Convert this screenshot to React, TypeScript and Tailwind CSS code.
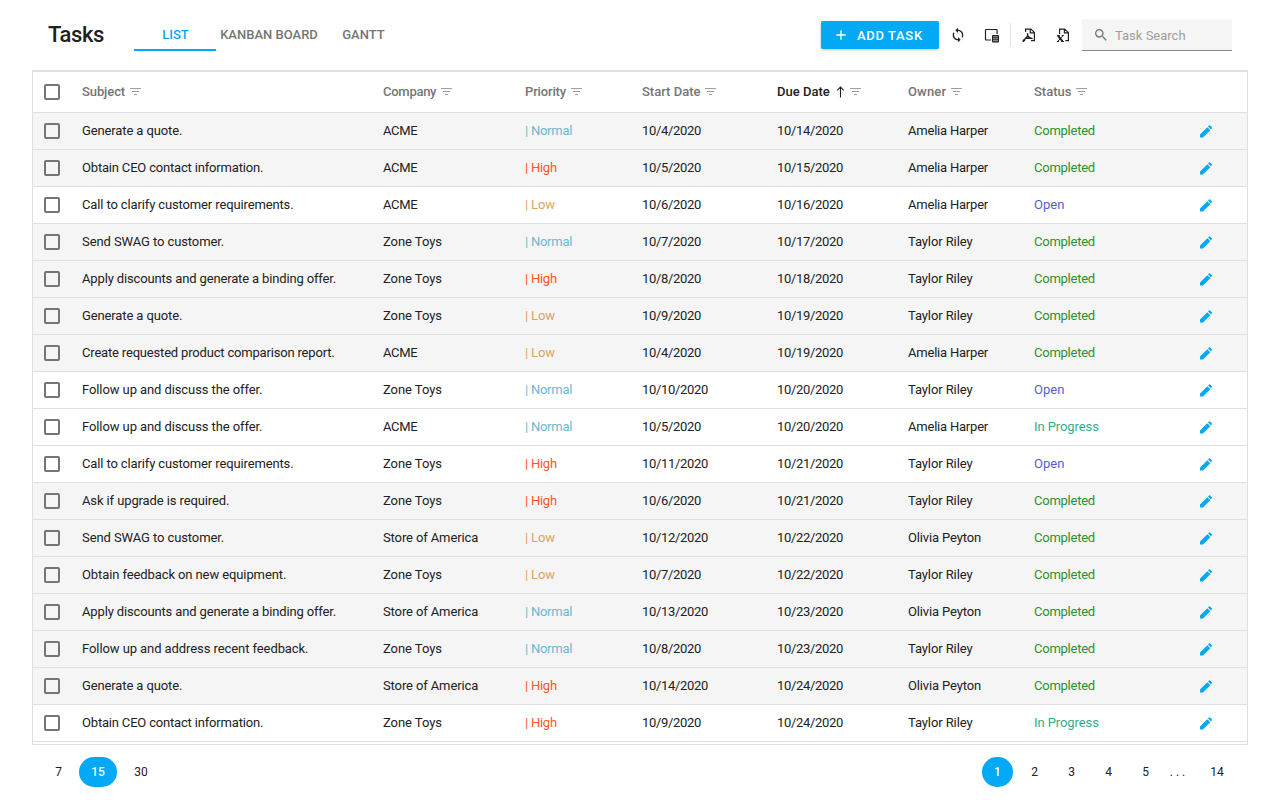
import { MdAdd, MdSearch, MdSync } from "react-icons/md";

type Priority = "Low" | "Normal" | "High";
type Status = "Open" | "In Progress" | "Completed";
type Task = [string, string, Priority, string, string, string, Status];

const tasks: Task[] = [
  ["Generate a quote.", "ACME", "Normal", "10/4/2020", "10/14/2020", "Amelia Harper", "Completed"],
  ["Obtain CEO contact information.", "ACME", "High", "10/5/2020", "10/15/2020", "Amelia Harper", "Completed"],
  ["Call to clarify customer requirements.", "ACME", "Low", "10/6/2020", "10/16/2020", "Amelia Harper", "Open"],
  ["Send SWAG to customer.", "Zone Toys", "Normal", "10/7/2020", "10/17/2020", "Taylor Riley", "Completed"],
  ["Apply discounts and generate a binding offer.", "Zone Toys", "High", "10/8/2020", "10/18/2020", "Taylor Riley", "Completed"],
  ["Generate a quote.", "Zone Toys", "Low", "10/9/2020", "10/19/2020", "Taylor Riley", "Completed"],
  ["Create requested product comparison report.", "ACME", "Low", "10/4/2020", "10/19/2020", "Amelia Harper", "Completed"],
  ["Follow up and discuss the offer.", "Zone Toys", "Normal", "10/10/2020", "10/20/2020", "Taylor Riley", "Open"],
  ["Follow up and discuss the offer.", "ACME", "Normal", "10/5/2020", "10/20/2020", "Amelia Harper", "In Progress"],
  ["Call to clarify customer requirements.", "Zone Toys", "High", "10/11/2020", "10/21/2020", "Taylor Riley", "Open"],
  ["Ask if upgrade is required.", "Zone Toys", "High", "10/6/2020", "10/21/2020", "Taylor Riley", "Completed"],
  ["Send SWAG to customer.", "Store of America", "Low", "10/12/2020", "10/22/2020", "Olivia Peyton", "Completed"],
  ["Obtain feedback on new equipment.", "Zone Toys", "Low", "10/7/2020", "10/22/2020", "Taylor Riley", "Completed"],
  ["Apply discounts and generate a binding offer.", "Store of America", "Normal", "10/13/2020", "10/23/2020", "Olivia Peyton", "Completed"],
  ["Follow up and address recent feedback.", "Zone Toys", "Normal", "10/8/2020", "10/23/2020", "Taylor Riley", "Completed"],
  ["Generate a quote.", "Store of America", "High", "10/14/2020", "10/24/2020", "Olivia Peyton", "Completed"],
  ["Obtain CEO contact information.", "Zone Toys", "High", "10/9/2020", "10/24/2020", "Taylor Riley", "In Progress"],
];

const priorityStyle: Record<Priority, string> = {
  Low: "text-[#dba267] tracking-[-0.15px]",
  Normal: "text-[#6ab9ce] tracking-[-0.25px]",
  High: "text-[#ff5722] tracking-[-0.25px]",
};

const statusStyle: Record<Status, string> = {
  Open: "text-[#505ed8]",
  "In Progress": "text-[#34ab90] tracking-[-0.08px]",
  Completed: "text-[#2b9130] tracking-[-0.25px]",
};

const tracking: Record<string, string> = {
  "Generate a quote.": "tracking-[-0.12px]",
  "Obtain CEO contact information.": "tracking-[-0.18px]",
  "Call to clarify customer requirements.": "tracking-[-0.13px]",
  "Send SWAG to customer.": "tracking-[-0.09px]",
  "Apply discounts and generate a binding offer.": "tracking-[-0.145px]",
  "Create requested product comparison report.": "tracking-[-0.18px]",
  "Follow up and discuss the offer.": "tracking-[-0.09px]",
  "Ask if upgrade is required.": "tracking-[-0.11px]",
  "Obtain feedback on new equipment.": "tracking-[-0.1px]",
  "Follow up and address recent feedback.": "tracking-[-0.08px]",
  ACME: "tracking-[-0.3px]",
  "Zone Toys": "tracking-[-0.06px]",
  "Store of America": "tracking-[-0.12px]",
  "Amelia Harper": "tracking-[-0.21px]",
  "Taylor Riley": "tracking-[-0.1px]",
  "Olivia Peyton": "tracking-[-0.14px]",
  Subject: "tracking-[-0.1px]",
  Company: "tracking-[-0.27px]",
  Priority: "tracking-[-0.15px]",
  Owner: "tracking-[0.15px]",
};

const columns = ["Subject", "Company", "Priority", "Start Date", "Due Date", "Owner", "Status"];
const rowGrid = "grid grid-cols-[49px_301px_142px_117px_135px_131px_126px_100px_1fr] items-center";

function CheckBox() {
  return <span className="ml-[11px] block size-4 rounded-[2px] border-2 border-[#757575]" />;
}

function FilterIcon() {
  return (
    <svg width="11" height="8" viewBox="0 0 11 8" fill="none" stroke="#9e9e9e" shapeRendering="crispEdges">
      <path d="M0 .5h11M2 3.5h7M4 6.5h3" />
    </svg>
  );
}

function SortIcon() {
  return (
    <svg width="9" height="12" viewBox="0 0 9 12" fill="none" stroke="#212121" strokeWidth="1.1">
      <path d="M4.5 11.5V1.2M1.3 4.3 4.5 1.1l3.2 3.2" />
    </svg>
  );
}

function PencilIcon() {
  return (
    <svg className="ml-auto mr-[35px]" width="12" height="13" viewBox="0 0 12 13" fill="#03a9f4">
      <path d="M0 12.500V9.500L7.300 2.200l3 3L3 12.500ZM8 1.500 9 .5a.8.8 0 0 1 1.100 0l1.700 1.700a.8.8 0 0 1 0 1.100l-1 1Z" />
    </svg>
  );
}

function ColumnChooserIcon() {
  return (
    <svg width="16" height="16" viewBox="0 0 16 16" fill="none" stroke="#212121">
      <path d="M7 13H2.2a.7.7 0 0 1-.7-.7V3.200a.7.7 0 0 1 .7-.7h10.200a.7.7 0 0 1 .7.7V7" strokeWidth="1.2" />
      <rect x="8" y="8" width="7" height="7.5" rx="1" fill="#212121" stroke="none" />
      <path d="M9 9.800h5M9 11.800h5M9 13.700h5" stroke="#fff" strokeWidth=".6" />
    </svg>
  );
}

function PdfIcon() {
  return (
    <svg width="16" height="16" viewBox="0 0 16 16" fill="none" stroke="#212121" strokeWidth="1.2">
      <path d="M4.600 5V2.100h5.300l3.500 3.300v8.200h-3.400M9.300 2.300v3.500h3.900" />
      <path d="M6.600 6.200v2.800L2.600 13.400M6.600 8.800l2.600 2.400M4.200 11.400l5-.4 2.400.6" strokeWidth="1.4" />
      <path d="M1.800 14.600 4 12.400" strokeWidth="2" />
    </svg>
  );
}

function XlsxIcon() {
  return (
    <svg width="16" height="16" viewBox="0 0 16 16" fill="none" stroke="#212121" strokeWidth="1.2">
      <path d="M4.600 7V2.100h5l3.800 3.300v8.200h-3M9.400 2.300v3.500h3.800" />
      <path d="m3 8.600 4.500 5.800" strokeWidth="2" />
      <path d="M8 8.600 2.700 14.500M2 8.600h2.700M6.800 8.600h2M1.800 14.500h2.300M6.300 14.500h2.800" strokeWidth="1" />
    </svg>
  );
}

export default function App() {
  return (
    <div className="flex h-[800px] w-[1280px] flex-col overflow-hidden bg-white px-8 font-[Roboto,sans-serif] text-[13px] text-[#212121]">
      <header className="flex h-[70px] shrink-0 items-center pl-4 pr-4">
        <h1 className="w-[86px] text-[22px] font-medium leading-8 tracking-[-0.4px]">Tasks</h1>
        <nav className="flex h-[32px] text-[13px] font-medium text-[#757575]">
          <button className="w-[82px] border-b-2 border-[#03a9f4] pl-px pt-[2px] text-[#03a9f4]">LIST</button>
          <button className="w-[106px] border-b-2 border-transparent pt-[2px]">KANBAN BOARD</button>
          <button className="w-[83px] border-b-2 border-transparent pt-[2px]">GANTT</button>
        </nav>
        <div className="ml-auto flex items-center">
          <button className="flex h-7 w-[118px] items-center rounded-[2px] bg-[#03a9f4] pl-3 font-medium tracking-[0.65px] text-white shadow-[0_1px_3px_rgba(0,0,0,0.25)]">
            <MdAdd className="mr-2 size-4" />
            <span className="pt-px">ADD TASK</span>
          </button>
          <button className="ml-[11px]"><MdSync className="size-4" /></button>
          <button className="ml-[18px]"><ColumnChooserIcon /></button>
          <span className="ml-[10px] h-6 w-px bg-[#e0e0e0]" />
          <button className="ml-[10px]"><PdfIcon /></button>
          <button className="ml-[18px]"><XlsxIcon /></button>
          <label className="ml-[11px] flex h-8 w-[150px] items-center rounded-t-[2px] border-b border-[#868686] bg-[#f5f5f5] pl-[11px] text-[#757575]">
            <MdSearch className="mr-[6px] size-4" />
            <span className="pt-[2px] text-[#9e9e9e]">Task Search</span>
          </label>
        </div>
      </header>

      <main className="h-[675px] shrink-0 overflow-hidden border border-t-2 border-[#e0e0e0]">
        <div className={`${rowGrid} h-[41px] border-b border-[#e0e0e0] font-medium text-[#757575]`}>
          <CheckBox />
          {columns.map((name) => (
            <div key={name} className={name === "Due Date" ? "flex items-center text-[#212121]" : "flex items-center"}>
              <span className={`mr-[5px] ${tracking[name] ?? ""}`}>{name}</span>
              {name === "Due Date" && <span className="ml-px mr-[5px]"><SortIcon /></span>}
              <FilterIcon />
            </div>
          ))}
        </div>
        {tasks.map(([subject, company, priority, start, due, owner, status], i) => (
          <div
            key={i}
            className={`${rowGrid} h-[37px] border-b border-[#e0e0e0] ${status === "Completed" ? "bg-[#f5f5f5]" : "bg-white"}`}
          >
            <CheckBox />
            <span className={tracking[subject]}>{subject}</span>
            <span className={tracking[company]}>{company}</span>
            <span className={priorityStyle[priority]}>| {priority}</span>
            <span className="tracking-[-0.31px]">{start}</span>
            <span className="tracking-[-0.31px]">{due}</span>
            <span className={tracking[owner]}>{owner}</span>
            <span className={statusStyle[status]}>{status}</span>
            <PencilIcon />
          </div>
        ))}
      </main>

      <footer className="flex h-[54px] shrink-0 items-center justify-between pl-[11px] pr-3 text-[12px]">
        <div className="flex items-center gap-[5px] text-center leading-[30px]">
          <span className="w-[31px]">7</span>
          <span className="w-[38px] rounded-[15px] bg-[#03a9f4] font-medium text-white">15</span>
          <span className="w-[38px]">30</span>
        </div>
        <div className="flex items-center text-center leading-[30px]">
          <span className="mr-[6px] w-[31px] rounded-full bg-[#03a9f4] font-medium text-white">1</span>
          <span className="mr-[6px] w-[31px]">2</span>
          <span className="mr-[6px] w-[31px]">3</span>
          <span className="mr-[6px] w-[31px]">4</span>
          <span className="mr-[6px] w-[31px]">5</span>
          <span className="mr-[10px] w-[21px]">. . .</span>
          <span className="w-[38px]">14</span>
        </div>
      </footer>
    </div>
  );
}
